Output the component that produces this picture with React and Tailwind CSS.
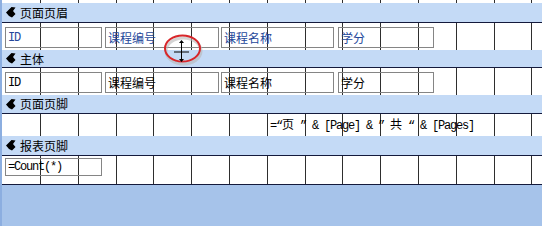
import React from "react";

// vertical ruler lines (1cm grid), in section coordinates (section starts at x=2)
const GRID_X = Array.from({ length: 14 }, (_, k) => Math.round(40 + 37.8 * k) - 2);

const cjk = { fontFamily: '"Noto Sans CJK SC", "Liberation Sans", sans-serif' };
const mono = { fontFamily: '"Liberation Mono", "DejaVu Sans Mono", "Noto Sans CJK SC", monospace' };

function Grid() {
  return (
    <svg className="absolute inset-0 w-full h-full pointer-events-none" aria-hidden="true">
      {GRID_X.map((x) => (
        <line key={x} x1={x + 0.5} x2={x + 0.5} y1="0" y2="100%" stroke="#2e2e2e" strokeWidth="1" />
      ))}
    </svg>
  );
}

function Marker() {
  return (
    <svg width="10" height="11" viewBox="0 0 10 11" className="shrink-0">
      <path d="M0 5.5 L5.5 0 L9.5 0.5 L7 4 L9.5 7 L6 10.5 L3 9 Z" fill="#000" />
    </svg>
  );
}

function Band({ label, h }) {
  return (
    <div className={`${h} shrink-0 bg-[#c4daf6] flex items-center pl-[4px] gap-[4px] text-[12px] text-black leading-none`} style={cjk}>
      <Marker />
      <span>{label}</span>
    </div>
  );
}

function Field({ children, w, ml, h = "h-[21px]", blue, monoText }) {
  return (
    <div
      className={`${w} ${ml} ${h} shrink-0 border border-[#858585] flex items-center pl-[2px] text-[12px] leading-none ${blue ? "text-[#24479a]" : "text-black"}`}
      style={monoText ? mono : cjk}
    >
      {children}
    </div>
  );
}

function Row({ blue }) {
  return (
    <div className="relative flex">
      <Field w="w-[97px]" ml="ml-[3px]" blue={blue} monoText>
        <span className="tracking-[-1.2px]">ID</span>
      </Field>
      <Field w="w-[114px]" ml="ml-[3px]" blue={blue}>课程编号</Field>
      <Field w="w-[113px]" ml="ml-[2px]" blue={blue}>课程名称</Field>
      <Field w="w-[96px]" ml="ml-[4px]" blue={blue}>学分</Field>
    </div>
  );
}

export default function App() {
  return (
    <div className="w-[542px] h-[226px] overflow-hidden relative flex flex-col bg-[#a6c3ea] border-l-2 border-[#8caee0]">
      {/* tail of previous section */}
      <div className="relative h-[3px] shrink-0 bg-white">
        <Grid />
      </div>

      <Band label="页面页眉" h="h-[19px]" />
      <div className="relative h-[28px] shrink-0 bg-white border-t border-[#141a3c] pt-[4px]">
        <Grid />
        <Row blue />
      </div>

      <Band label="主体" h="h-[17px]" />
      <div className="relative h-[28px] shrink-0 bg-white border-t border-[#141a3c] pt-[4px]">
        <Grid />
        <Row />
      </div>

      <Band label="页面页脚" h="h-[18px]" />
      <div className="relative h-[23px] shrink-0 bg-white border-t border-[#141a3c] flex items-center">
        <Grid />
        <div className="relative ml-[268px] text-[12px] leading-none text-black whitespace-pre" style={mono}>
          <span className="tracking-[-1.2px]">=“</span>
          <span style={cjk}>页</span>
          <span className="tracking-[-1.2px]">{" ” & [Page] & ” "}</span>
          <span style={cjk}>共</span>
          <span className="tracking-[-1.2px]">{" “ & [Pages]"}</span>
        </div>
      </div>

      <Band label="报表页脚" h="h-[19px]" />
      <div className="relative h-[30px] shrink-0 bg-white border-y border-[#141a3c] pt-[2px]">
        <Grid />
        <div className="relative flex">
          <Field w="w-[97px]" ml="ml-[3px]" h="h-[18px]" monoText>
            <span className="tracking-[-1.2px]">=Count(*)</span>
          </Field>
        </div>
      </div>

      {/* resize cursor highlight */}
      <svg className="absolute left-[158px] top-[32px] pointer-events-none" width="45" height="34" viewBox="0 0 45 34">
        <ellipse cx="22.5" cy="17.5" rx="17.5" ry="13" fill="none" stroke="#b8b8b8" strokeWidth="3" opacity="0.6" transform="translate(1 1.5)" />
        <ellipse cx="22.5" cy="16.5" rx="17.5" ry="13" fill="none" stroke="#d8262a" strokeWidth="2" />
        <path d="M21 11 L19 11 L21.5 8 L24 11 L22 11 L22 19.5 L29 19.5 L29 20.5 L22 20.5 L22 27 L24 27 L21.5 30 L19 27 L21 27 L21 20.5 L14 20.5 L14 19.5 L21 19.5 Z" fill="#000" />
      </svg>
    </div>
  );
}
